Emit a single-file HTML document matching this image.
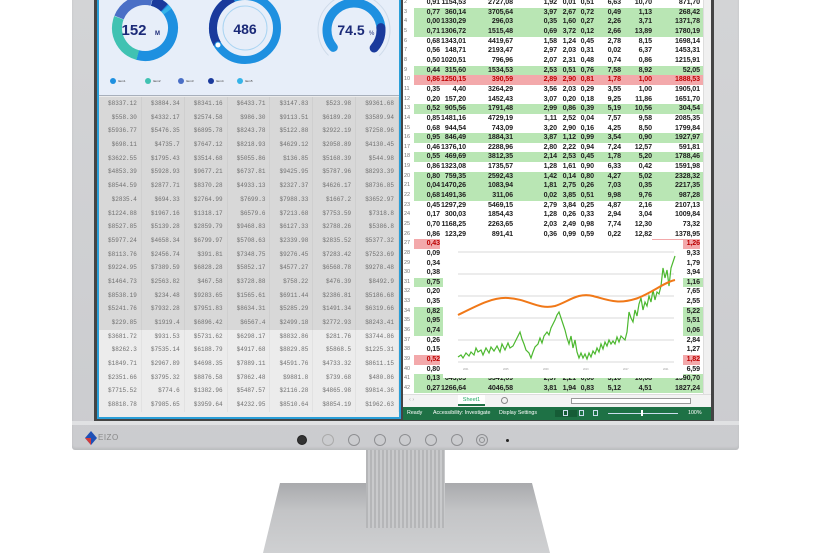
<!DOCTYPE html>
<html><head><meta charset="utf-8"><style>
*{margin:0;padding:0;box-sizing:border-box}
body{width:829px;height:553px;overflow:hidden;background:#fff;position:relative;font-family:"Liberation Sans",sans-serif}
.abs{position:absolute}
#bezel{left:72px;top:0;width:667px;height:450px;background:linear-gradient(#d3d4d6,#cbcccf);border-radius:0 0 3px 3px;box-shadow:inset 0 -2px 2px rgba(0,0,0,.08)}
#screen{left:94px;top:0;width:620px;height:422px;background:#444}
#left{left:97px;top:0;width:304px;height:419px;background:#ececec;border:2px solid #2a9fd8;border-top:none;overflow:hidden}
#dash{left:0;top:0;width:300px;height:96px;background:#e7eef9;border-bottom:1px solid #a8b0bc}
#tbl{left:0;top:97px;width:300px}
#tbl .gr{background:#d8d8d8}
#tbl .row{height:13.7px;display:flex;font-family:"Liberation Mono",monospace;font-size:6px;color:#707070;line-height:13.7px}
#tbl .row span{width:43.2px;text-align:right;padding-right:4px;border-right:1px solid rgba(0,0,0,.04)}
#xl{left:403px;top:0;width:308px;height:420px;background:#fff;overflow:hidden}
#rows{left:0;top:-1.8px;width:300px}
.r{height:9.65px;display:flex;font-size:7.1px;font-weight:bold;color:#202020;line-height:9.65px;white-space:nowrap;letter-spacing:-.1px}
.r i{font-style:normal;font-weight:normal;color:#777;width:11px;font-size:5.5px;text-align:left;padding-left:1px;background:#fff}
.r b{display:inline-block;text-align:right}
.r b:nth-of-type(1){width:26px}.r b:nth-of-type(2){width:26px}.r b:nth-of-type(3){width:47px}
.r b:nth-of-type(4){width:44px}.r b:nth-of-type(5){width:19px}.r b:nth-of-type(6){width:18px}
.r b:nth-of-type(7){width:27px}.r b:nth-of-type(8){width:31px}.r b:nth-of-type(9){width:48px}
.g{background:#b9e6b4}.rd{background:#f3a9ab;color:#b00}
.ra b:first-of-type{background:#f3a9ab;color:#b00}
.ra b:last-of-type{background:#f3a9ab;color:#b00}
#vs{left:300px;top:0;width:8px;height:394px;background:#f0f0f0;border-left:1px solid #ddd}
#tabs{left:0;top:394px;width:308px;height:13px;background:#f3f3f3;border-top:1px solid #ddd;font-size:5.5px;color:#2a6}
#status{left:0;top:407px;width:308px;height:13px;background:#1e7145;color:#fff;font-size:5.3px;line-height:12px;white-space:nowrap}
.btn{position:absolute;top:434px;width:12px;height:12px;border-radius:50%;border:1px solid #8e8f92}
</style></head><body>
<div id="bezel" class="abs"></div>
<div id="screen" class="abs"></div>
<div class="abs" style="left:72px;top:421px;width:667px;height:4px;background:#e0e1e3"></div>

<div id="left" class="abs">
 <div id="dash" class="abs">
  <svg width="300" height="96" style="position:absolute;left:0;top:0">
   <g transform="translate(46,28)" fill="none" stroke-width="10">
    <circle r="28" stroke="#1e90e0" stroke-dasharray="88 200" transform="rotate(-75)"/>
    <circle r="28" stroke="#40c2b2" stroke-dasharray="47 200" transform="rotate(105)"/>
    <circle r="28" stroke="#4a6fc6" stroke-dasharray="40 200" transform="rotate(202)"/>
    <circle r="28" stroke="#1a3a9c" stroke-dasharray="14 200" transform="rotate(285)"/>
    <circle r="28" stroke="#36b4e8" stroke-dasharray="4 200" transform="rotate(316)"/>
   </g>
   <text x="35" y="35" font-size="15" font-weight="bold" fill="#1b2a78" text-anchor="middle">152</text>
   <text x="56" y="35" font-size="6" font-weight="bold" fill="#1b2a78">M</text>
   <g transform="translate(146,28)" fill="none">
    <circle r="32" stroke="#1e90e0" stroke-width="8"/>
    <circle r="32" stroke="#1a3a9c" stroke-width="8" stroke-dasharray="55 300" transform="rotate(150)"/>
    <circle r="22" stroke="#a9d4f2" stroke-width="1"/>
    <circle cx="-27" cy="17" r="3" fill="#fff" stroke="#1e90e0" stroke-width="1"/>
   </g>
   <text x="146" y="34" font-size="14" font-weight="bold" fill="#1b2a78" text-anchor="middle">486</text>
   <g transform="translate(255,30)" fill="none">
    <circle r="36" stroke="#cfdbea" stroke-width="1" stroke-dasharray="170 300" transform="rotate(135)"/>
    <circle r="27" stroke="#1e90e0" stroke-width="9" stroke-linecap="round" stroke-dasharray="105 300" transform="rotate(140)"/>
    <circle r="27" stroke="#1a3a9c" stroke-width="9" stroke-linecap="round" stroke-dasharray="22 300" transform="rotate(355)"/>
   </g>
   <text x="252" y="35" font-size="14" font-weight="bold" fill="#1b2a78" text-anchor="middle">74.5</text>
   <text x="270" y="35" font-size="6" fill="#1b2a78">%</text>
   <g font-size="3" fill="#333">
    <circle cx="14" cy="81" r="3" fill="#1e90e0"/><text x="19" y="82">Item1</text>
    <circle cx="49" cy="81" r="3" fill="#40c2b2"/><text x="54" y="82">Item2</text>
    <circle cx="82" cy="81" r="3" fill="#4a6fc6"/><text x="87" y="82">Item3</text>
    <circle cx="112" cy="81" r="3" fill="#1a3a9c"/><text x="117" y="82">Item4</text>
    <circle cx="141" cy="81" r="3" fill="#36b4e8"/><text x="146" y="82">Item5</text>
   </g>
  </svg>
 </div>
 <div id="tbl" class="abs">
  <div class="gr">
  <div class="row"><span>$8337.12</span><span>$3884.34</span><span>$8341.16</span><span>$6433.71</span><span>$3147.83</span><span>$523.98</span><span>$9361.68</span></div>
  <div class="row"><span>$558.30</span><span>$4332.17</span><span>$2574.58</span><span>$986.30</span><span>$9113.51</span><span>$6189.20</span><span>$3589.94</span></div>
  <div class="row"><span>$5936.77</span><span>$5476.35</span><span>$6895.78</span><span>$8243.78</span><span>$5122.88</span><span>$2922.19</span><span>$7258.96</span></div>
  <div class="row"><span>$698.11</span><span>$4735.7</span><span>$7647.12</span><span>$8218.93</span><span>$4629.12</span><span>$2058.89</span><span>$4130.45</span></div>
  <div class="row"><span>$3622.55</span><span>$1795.43</span><span>$3514.68</span><span>$5055.86</span><span>$136.85</span><span>$5168.39</span><span>$544.98</span></div>
  <div class="row"><span>$4853.39</span><span>$5928.93</span><span>$9677.21</span><span>$6737.81</span><span>$9425.95</span><span>$5787.96</span><span>$8293.39</span></div>
  <div class="row"><span>$8544.59</span><span>$2877.71</span><span>$8370.28</span><span>$4933.13</span><span>$2327.37</span><span>$4626.17</span><span>$8736.85</span></div>
  <div class="row"><span>$2835.4</span><span>$694.33</span><span>$2764.99</span><span>$7699.3</span><span>$7988.33</span><span>$1667.2</span><span>$3652.97</span></div>
  <div class="row"><span>$1224.88</span><span>$1967.16</span><span>$1318.17</span><span>$6579.6</span><span>$7213.68</span><span>$7753.59</span><span>$7318.8</span></div>
  <div class="row"><span>$8527.85</span><span>$5139.28</span><span>$2859.79</span><span>$9468.83</span><span>$6127.33</span><span>$2788.26</span><span>$5386.8</span></div>
  <div class="row"><span>$5977.24</span><span>$4658.34</span><span>$6799.97</span><span>$5708.63</span><span>$2339.98</span><span>$2835.52</span><span>$5377.32</span></div>
  <div class="row"><span>$8113.76</span><span>$2456.74</span><span>$391.81</span><span>$7348.75</span><span>$9276.45</span><span>$7283.42</span><span>$7523.69</span></div>
  <div class="row"><span>$9224.95</span><span>$7389.59</span><span>$6828.28</span><span>$5852.17</span><span>$4577.27</span><span>$6568.78</span><span>$9278.48</span></div>
  <div class="row"><span>$1464.73</span><span>$2563.82</span><span>$467.58</span><span>$3728.88</span><span>$758.22</span><span>$476.39</span><span>$8492.9</span></div>
  <div class="row"><span>$8538.19</span><span>$234.48</span><span>$9283.65</span><span>$1565.61</span><span>$6911.44</span><span>$2386.81</span><span>$5186.68</span></div>
  <div class="row"><span>$5241.76</span><span>$7932.28</span><span>$7951.83</span><span>$8634.31</span><span>$5285.29</span><span>$1491.34</span><span>$6319.66</span></div>
  <div class="row"><span>$229.85</span><span>$1919.4</span><span>$6896.42</span><span>$6567.4</span><span>$2499.18</span><span>$2772.93</span><span>$8243.41</span></div>
  </div>
  <div class="row"><span>$3681.72</span><span>$931.53</span><span>$5731.62</span><span>$6298.17</span><span>$8832.86</span><span>$281.76</span><span>$3744.86</span></div>
  <div class="row"><span>$8262.3</span><span>$7535.14</span><span>$6188.79</span><span>$4917.68</span><span>$8829.85</span><span>$5868.5</span><span>$1225.31</span></div>
  <div class="row"><span>$1849.71</span><span>$2967.89</span><span>$4698.35</span><span>$7889.11</span><span>$4591.76</span><span>$4733.32</span><span>$8611.15</span></div>
  <div class="row"><span>$2351.66</span><span>$3795.32</span><span>$8876.58</span><span>$7862.48</span><span>$9881.8</span><span>$739.68</span><span>$480.86</span></div>
  <div class="row"><span>$7715.52</span><span>$774.6</span><span>$1382.96</span><span>$5487.57</span><span>$2116.28</span><span>$4865.98</span><span>$9814.36</span></div>
  <div class="row"><span>$8818.78</span><span>$7985.65</span><span>$3959.64</span><span>$4232.95</span><span>$8510.64</span><span>$8854.19</span><span>$1962.63</span></div>
 </div>
</div>

<div id="xl" class="abs">
 <div id="rows" class="abs">
  <div class="r"><i>2</i><b>0,91</b><b>1154,53</b><b>2727,08</b><b>1,92</b><b>0,01</b><b>0,51</b><b>6,63</b><b>10,70</b><b>871,70</b></div>
  <div class="r g"><i>3</i><b>0,77</b><b>360,14</b><b>3705,64</b><b>3,97</b><b>2,67</b><b>0,72</b><b>0,49</b><b>1,13</b><b>268,42</b></div>
  <div class="r g"><i>4</i><b>0,00</b><b>1330,29</b><b>296,03</b><b>0,35</b><b>1,60</b><b>0,27</b><b>2,26</b><b>3,71</b><b>1371,78</b></div>
  <div class="r g"><i>5</i><b>0,71</b><b>1306,72</b><b>1515,48</b><b>0,69</b><b>3,72</b><b>0,12</b><b>2,66</b><b>13,89</b><b>1780,19</b></div>
  <div class="r"><i>6</i><b>0,68</b><b>1343,01</b><b>4419,67</b><b>1,58</b><b>1,24</b><b>0,45</b><b>2,78</b><b>8,15</b><b>1698,14</b></div>
  <div class="r"><i>7</i><b>0,56</b><b>148,71</b><b>2193,47</b><b>2,97</b><b>2,03</b><b>0,31</b><b>0,02</b><b>6,37</b><b>1453,31</b></div>
  <div class="r"><i>8</i><b>0,50</b><b>1020,51</b><b>796,96</b><b>2,07</b><b>2,31</b><b>0,48</b><b>0,74</b><b>0,86</b><b>1215,91</b></div>
  <div class="r g"><i>9</i><b>0,44</b><b>315,60</b><b>1534,53</b><b>2,53</b><b>0,51</b><b>0,76</b><b>7,58</b><b>8,92</b><b>52,05</b></div>
  <div class="r rd"><i>10</i><b>0,86</b><b>1250,15</b><b>390,59</b><b>2,89</b><b>2,90</b><b>0,81</b><b>1,78</b><b>1,00</b><b>1888,53</b></div>
  <div class="r"><i>11</i><b>0,35</b><b>4,40</b><b>3264,29</b><b>3,56</b><b>2,03</b><b>0,29</b><b>3,55</b><b>1,00</b><b>1905,01</b></div>
  <div class="r"><i>12</i><b>0,20</b><b>157,20</b><b>1452,43</b><b>3,07</b><b>0,20</b><b>0,18</b><b>9,25</b><b>11,86</b><b>1651,70</b></div>
  <div class="r g"><i>13</i><b>0,52</b><b>905,56</b><b>1791,48</b><b>2,99</b><b>0,86</b><b>0,39</b><b>5,19</b><b>10,56</b><b>304,54</b></div>
  <div class="r"><i>14</i><b>0,85</b><b>1481,16</b><b>4729,19</b><b>1,11</b><b>2,52</b><b>0,04</b><b>7,57</b><b>9,58</b><b>2085,35</b></div>
  <div class="r"><i>15</i><b>0,68</b><b>944,54</b><b>743,09</b><b>3,20</b><b>2,90</b><b>0,16</b><b>4,25</b><b>8,50</b><b>1799,84</b></div>
  <div class="r g"><i>16</i><b>0,95</b><b>846,49</b><b>1884,31</b><b>3,87</b><b>1,12</b><b>0,99</b><b>3,54</b><b>0,90</b><b>1927,97</b></div>
  <div class="r"><i>17</i><b>0,46</b><b>1376,10</b><b>2288,96</b><b>2,80</b><b>2,22</b><b>0,94</b><b>7,24</b><b>12,57</b><b>591,81</b></div>
  <div class="r g"><i>18</i><b>0,55</b><b>469,69</b><b>3812,35</b><b>2,14</b><b>2,53</b><b>0,45</b><b>1,78</b><b>5,20</b><b>1788,46</b></div>
  <div class="r"><i>19</i><b>0,86</b><b>1323,08</b><b>1735,57</b><b>1,28</b><b>1,61</b><b>0,90</b><b>6,33</b><b>0,42</b><b>1591,98</b></div>
  <div class="r g"><i>20</i><b>0,80</b><b>759,35</b><b>2592,43</b><b>1,42</b><b>0,14</b><b>0,80</b><b>4,27</b><b>5,02</b><b>2328,32</b></div>
  <div class="r g"><i>21</i><b>0,04</b><b>1470,26</b><b>1083,94</b><b>1,81</b><b>2,75</b><b>0,26</b><b>7,03</b><b>0,35</b><b>2217,35</b></div>
  <div class="r g"><i>22</i><b>0,68</b><b>1491,36</b><b>311,06</b><b>0,02</b><b>3,85</b><b>0,51</b><b>9,98</b><b>9,76</b><b>987,28</b></div>
  <div class="r"><i>23</i><b>0,45</b><b>1297,29</b><b>5469,15</b><b>2,79</b><b>3,84</b><b>0,25</b><b>4,87</b><b>2,16</b><b>2107,13</b></div>
  <div class="r"><i>24</i><b>0,17</b><b>300,03</b><b>1854,43</b><b>1,28</b><b>0,26</b><b>0,33</b><b>2,94</b><b>3,04</b><b>1009,84</b></div>
  <div class="r"><i>25</i><b>0,70</b><b>1168,25</b><b>2263,65</b><b>2,03</b><b>2,49</b><b>0,98</b><b>7,74</b><b>12,30</b><b>73,32</b></div>
  <div class="r"><i>26</i><b>0,86</b><b>123,29</b><b>891,41</b><b>0,36</b><b>0,99</b><b>0,59</b><b>0,22</b><b>12,82</b><b>1378,95</b></div>
  <div class="r ra"><i>27</i><b>0,43</b><b></b><b></b><b></b><b></b><b></b><b></b><b></b><b>1,26</b></div>
  <div class="r"><i>28</i><b>0,09</b><b></b><b></b><b></b><b></b><b></b><b></b><b></b><b>9,33</b></div>
  <div class="r"><i>29</i><b>0,34</b><b></b><b></b><b></b><b></b><b></b><b></b><b></b><b>1,79</b></div>
  <div class="r"><i>30</i><b>0,38</b><b></b><b></b><b></b><b></b><b></b><b></b><b></b><b>3,94</b></div>
  <div class="r g"><i>31</i><b>0,75</b><b></b><b></b><b></b><b></b><b></b><b></b><b></b><b>1,16</b></div>
  <div class="r"><i>32</i><b>0,20</b><b></b><b></b><b></b><b></b><b></b><b></b><b></b><b>7,65</b></div>
  <div class="r"><i>33</i><b>0,35</b><b></b><b></b><b></b><b></b><b></b><b></b><b></b><b>2,55</b></div>
  <div class="r g"><i>34</i><b>0,82</b><b></b><b></b><b></b><b></b><b></b><b></b><b></b><b>5,22</b></div>
  <div class="r g"><i>35</i><b>0,95</b><b></b><b></b><b></b><b></b><b></b><b></b><b></b><b>5,51</b></div>
  <div class="r g"><i>36</i><b>0,74</b><b></b><b></b><b></b><b></b><b></b><b></b><b></b><b>0,06</b></div>
  <div class="r"><i>37</i><b>0,26</b><b></b><b></b><b></b><b></b><b></b><b></b><b></b><b>2,84</b></div>
  <div class="r"><i>38</i><b>0,15</b><b></b><b></b><b></b><b></b><b></b><b></b><b></b><b>1,27</b></div>
  <div class="r ra"><i>39</i><b>0,52</b><b></b><b></b><b></b><b></b><b></b><b></b><b></b><b>1,82</b></div>
  <div class="r"><i>40</i><b>0,80</b><b></b><b></b><b></b><b></b><b></b><b></b><b></b><b>6,59</b></div>
  <div class="r g"><i>41</i><b>0,13</b><b>643,03</b><b>3341,69</b><b>2,37</b><b>2,21</b><b>0,60</b><b>3,10</b><b>10,08</b><b>1590,70</b></div>
  <div class="r g"><i>42</i><b>0,27</b><b>1266,64</b><b>4046,58</b><b>3,81</b><b>1,94</b><b>0,83</b><b>5,12</b><b>4,51</b><b>1827,24</b></div>
 </div>
 <svg class="abs" style="left:40px;top:240px" width="240" height="138">
  <rect width="240" height="138" fill="#fff"/>
  <g stroke="#d9d9d9" stroke-width="1">
   <line x1="15" x2="231" y1="12" y2="12"/><line x1="15" x2="231" y1="34" y2="34"/><line x1="15" x2="231" y1="56" y2="56"/>
   <line x1="15" x2="231" y1="78" y2="78"/><line x1="15" x2="231" y1="100" y2="100"/><line x1="15" x2="231" y1="122" y2="122"/>
  </g>
  <polyline fill="none" stroke="#4cb82f" stroke-width="1.2" points="15,117 18,115 20,118 23,113 26,116 28,112 31,115 33,108 35,112 38,110 40,115 43,108 46,113 48,107 51,111 54,106 57,112 59,104 62,110 65,103 67,108 70,106 73,100 75,96 77,92 79,99 81,104 83,110 86,113 88,118 90,112 92,107 95,104 97,98 99,103 101,96 104,92 106,95 108,88 110,84 112,80 114,75 116,72 118,78 120,84 122,90 124,98 126,104 128,96 130,108 132,100 134,112 136,118 138,113 140,118 142,114 144,119 146,113 148,117 150,111 152,114 154,108 156,112 158,104 160,109 162,102 164,106 166,100 168,104 170,101 172,104 174,97 176,102 178,96 180,98 182,100 184,92 186,72 188,78 190,82 192,70 194,76 196,64 198,58 200,70 202,62 204,66 206,56 208,62 210,50 212,60 214,52 216,54 218,46 220,28 222,38 224,30 226,46 228,28 230,22 232,16"/>
  <path fill="none" stroke="#f07818" stroke-width="2" d="M15,75 C35,65 50,57 65,58 C85,59 95,70 112,66 C125,62 135,52 150,56 C165,60 175,65 195,58 C210,52 222,42 232,40"/>
  <g font-size="2.5" fill="#999"><text x="20" y="130">2001</text><text x="60" y="130">2005</text><text x="100" y="130">2009</text><text x="140" y="130">2013</text><text x="180" y="130">2017</text><text x="220" y="130">2021</text></g>
 </svg>
 <div id="vs" class="abs"></div>
 <div id="tabs" class="abs">
  <span class="abs" style="left:6px;top:2px;color:#aaa">‹ ›</span>
  <span class="abs" style="left:55px;top:0;width:27px;height:11px;background:#fff;border-bottom:2px solid #1e7145;text-align:center;line-height:10px">Sheet1</span>
  <span class="abs" style="left:98px;top:2px;width:7px;height:7px;border:1px solid #888;border-radius:50%"></span>
  <span class="abs" style="left:168px;top:3px;width:120px;height:6px;border:1px solid #999;background:#fff"></span>
 </div>
 <div id="status" class="abs">
  <span class="abs" style="left:4px">Ready</span>
  <span class="abs" style="left:30px">Accessibility: Investigate</span>
  <span class="abs" style="left:96px">Display Settings</span>
  <span class="abs" style="left:152px;top:3px;width:22px;height:7px;background:#155c36"></span>
  <span class="abs" style="left:160px;top:3px;width:5px;height:6px;border:1px solid #cde"></span>
  <span class="abs" style="left:176px;top:3px;width:5px;height:6px;border:1px solid #cde"></span>
  <span class="abs" style="left:190px;top:3px;width:5px;height:6px;border:1px solid #cde"></span>
  <span class="abs" style="left:205px;top:6px;width:70px;height:1px;background:#cde"></span>
  <span class="abs" style="left:238px;top:3px;width:2px;height:6px;background:#fff"></span>
  <span class="abs" style="left:285px">100%</span>
 </div>
</div>

<svg class="abs" style="left:84px;top:430px" width="14" height="16"><polygon points="7,1 13,8 7,15 1,8" fill="#1f4fb5"/><polygon points="1,8 7,15 7,8" fill="#d23b3b"/></svg>
<span class="abs" style="left:98px;top:433px;font-size:8px;color:#888;letter-spacing:.5px">EIZO</span>
<div class="btn" style="left:297px;background:#333;border-color:#222;width:10px;height:10px;top:435px"></div>
<div class="btn" style="left:322px;border-color:#aaa"></div>
<div class="btn" style="left:348px"></div>
<div class="btn" style="left:374px"></div>
<div class="btn" style="left:399px"></div>
<div class="btn" style="left:425px"></div>
<div class="btn" style="left:451px"></div>
<div class="btn" style="left:476px"><div style="margin:2px;width:6px;height:6px;border:1px solid #8e8f92;border-radius:50%"></div></div>
<div class="abs" style="left:506px;top:439px;width:3px;height:3px;border-radius:50%;background:#222"></div>

<div class="abs" style="left:263px;top:483px;width:287px;height:70px;background:linear-gradient(#a9aaad,#c3c4c6 40%,#cfd0d2);clip-path:polygon(17px 0,269px 0,287px 70px,0 70px)"></div>
<div class="abs" style="left:366px;top:450px;width:79px;height:78px;background:repeating-linear-gradient(90deg,#b5b6b8 0,#b5b6b8 2px,#c9cacc 2px,#c9cacc 4px)"></div>
</body></html>
